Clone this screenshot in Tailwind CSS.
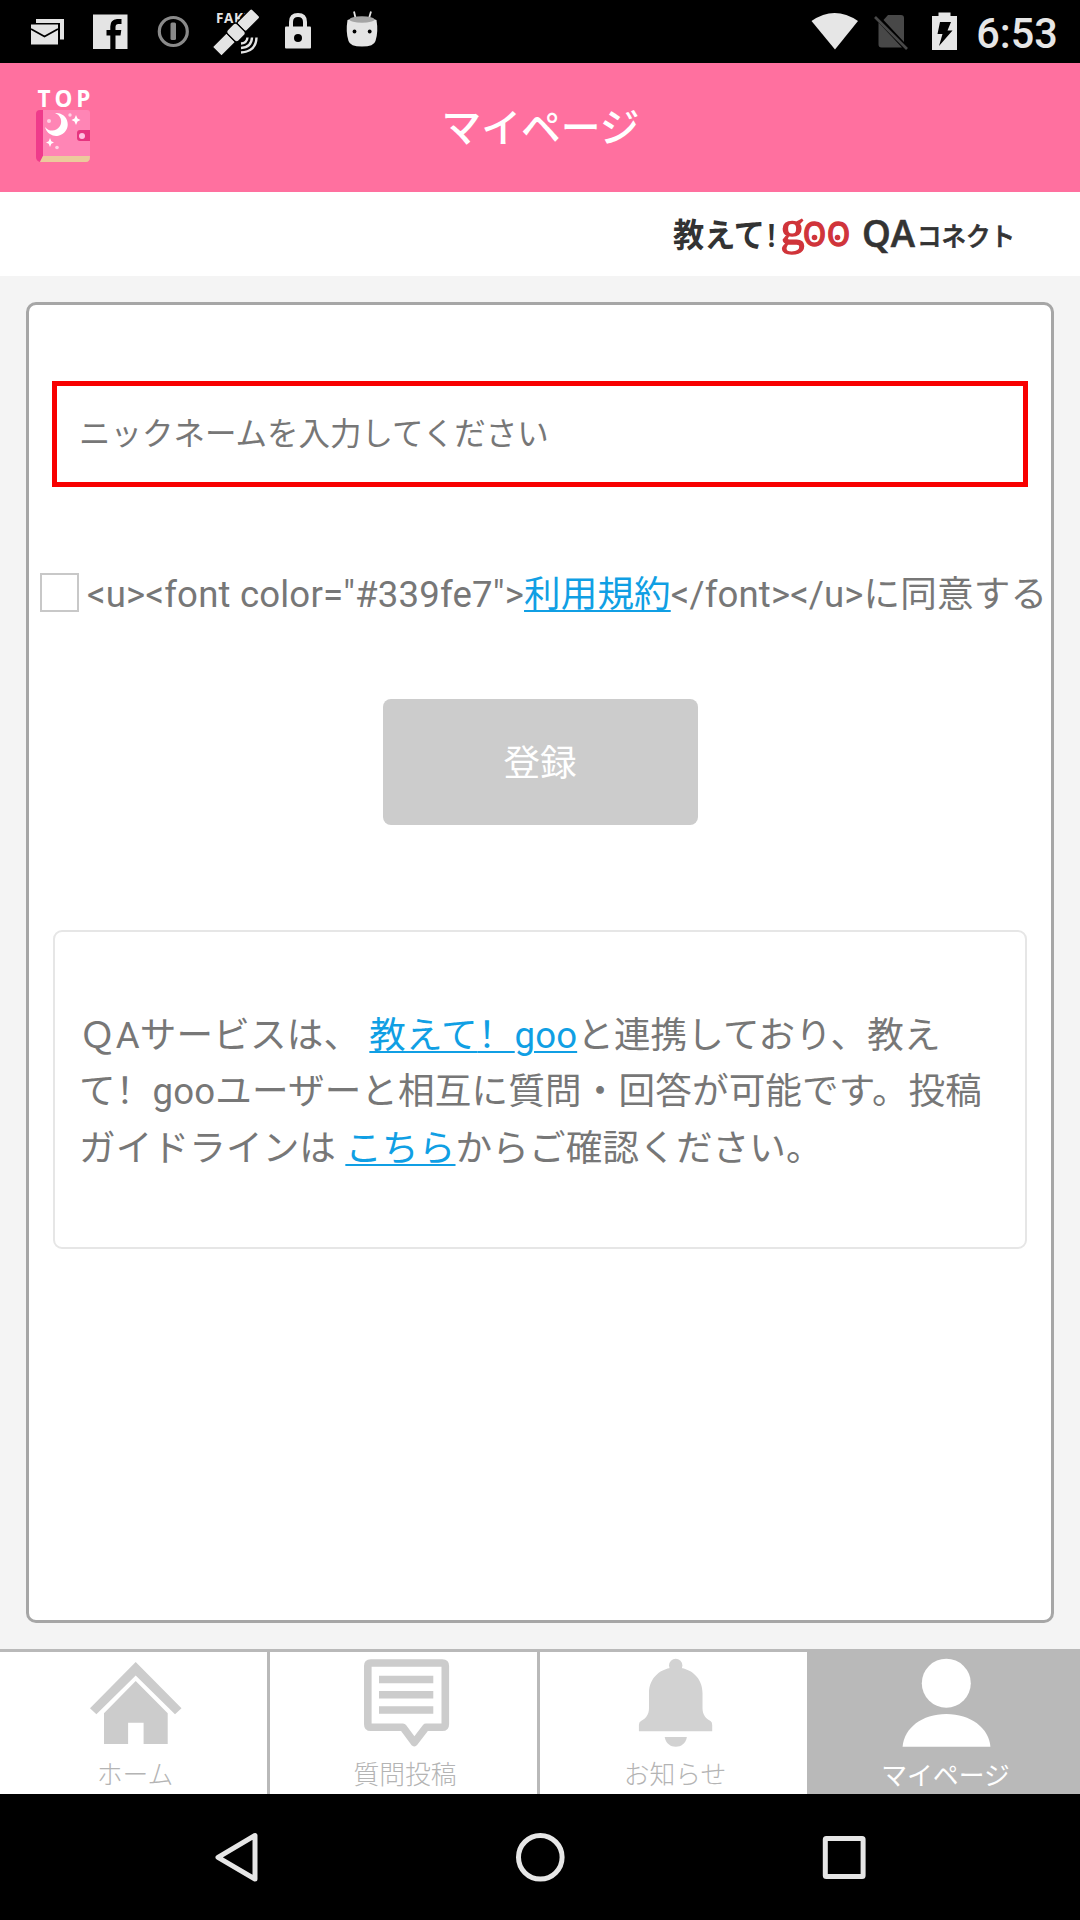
<!DOCTYPE html>
<html lang="ja">
<head>
<meta charset="utf-8">
<title>マイページ</title>
<script src="https://cdn.jsdelivr.net/npm/@tailwindcss/browser@4"></script>
</head>
<body class="bg-black">
<div class="flex h-[1920px] w-[1080px] flex-col overflow-hidden bg-[#f4f4f4] font-['Roboto','Noto_Sans_CJK_JP',sans-serif] text-[#777]">

  <!-- status bar -->
  <div class="flex h-[63px] shrink-0 justify-between bg-black">
    <svg class="block h-[63px] w-[400px]" viewBox="0 0 400 63" fill="#e4e4e4">
      <path d="M36 19H64V39.500H60V23H36Z"/>
      <path d="M31 24.500H58V44.500H31Z"/>
      <path d="M31 29L44.500 36.500L58 29" fill="none" stroke="#000" stroke-width="1.800"/>
      <path d="M93 14.500H127.500V49H115.500V35.500H120.500L121.300 30H115.500V27Q115.500 24 118.500 24H121.500V19H117Q110.300 19.500 110.300 26.500V30H106.500V35.500H110.300V49H93Z"/>
      <circle cx="173.300" cy="31.500" r="14" fill="none" stroke="#8a8a8a" stroke-width="3.200"/>
      <rect x="170.500" y="22.500" width="5.500" height="17.500" rx="1.500" fill="#8a8a8a"/>
      <text x="216" y="23" font-family="Open Sans" font-weight="700" font-size="13.500" textLength="35">FAKE</text>
      <g transform="translate(236 32.500) rotate(-45)" stroke="#000" stroke-width="1.300">
        <rect x="7" y="-6.500" width="21" height="13" rx="2"/>
        <rect x="-27" y="-6.500" width="20" height="13" rx="1"/>
        <rect x="-7" y="-8" width="14" height="16" rx="3"/>
      </g>
      <g fill="none" stroke="#e4e4e4" stroke-width="2.400"><path d="M241 43.500Q247 43 247.500 37.500"/><path d="M241 48Q251.500 47.500 252 37.500"/><path d="M241 52.500Q256 51.500 256.500 37.500"/></g>
      <path d="M291 28V22Q291 15 298 15T305 22V28" fill="none" stroke="#e4e4e4" stroke-width="4"/>
      <rect x="285" y="26.500" width="26" height="22" rx="1"/>
      <circle cx="298" cy="38" r="4" fill="#000"/>
      <path d="M354 11.500L356 20M371 11.500L368.500 20" stroke="#e4e4e4" stroke-width="1.800"/>
      <path d="M347.500 20Q362 14 376.500 20Q378.500 32 375.500 41Q374 46.500 362 46.500T348.500 41Q345.500 32 347.500 20Z"/>
      <ellipse cx="362" cy="19.500" rx="12.500" ry="3.300" fill="#a5a5a5"/>
      <circle cx="354.500" cy="31.500" r="1.900" fill="#000"/><circle cx="369.700" cy="31.500" r="1.900" fill="#000"/>
    </svg>
    <svg class="block h-[63px] w-[300px]" viewBox="0 0 300 63" fill="#e6e6e6">
      <path d="M31.500 21Q54.500 5 78 21L55 49.500Z"/>
      <path d="M108 15H121Q124 15 124 18V42L103.500 20ZM98.500 22.500L122 47.500H101.500Q98.500 47.500 98.500 44.500Z" fill="#484848"/>
      <path d="M95 17L127 49" stroke="#484848" stroke-width="2.600"/>
      <path d="M158.500 12.500H170.500V16H177V50H152V16H158.500Z"/>
      <path d="M160 22H171L167.500 30.500H172.500L159 46L162.500 34H157.500Z" fill="#000"/>
      <text x="196.300" y="48.300" font-family="Roboto" font-weight="500" font-size="42" textLength="81.500" lengthAdjust="spacingAndGlyphs">6:53</text>
    </svg>
  </div>

  <!-- header -->
  <header class="grid h-[129px] shrink-0 grid-cols-3 items-center bg-[#ff709f]">
    <svg class="mb-[5px] ml-8 block h-[90px] w-[66px]" viewBox="32 80 66 90">
      <text x="37.500" y="107" font-family="Open Sans" font-weight="700" font-size="22.500" fill="#fff" textLength="53">TOP</text>
      <rect x="38" y="110" width="52" height="51" rx="3" fill="#ff85b5"/>
      <path d="M40 110H43V156L40 162Q36 161 36 157V114Q36 110 40 110Z" fill="#ef3b8b"/>
      <path d="M43 156H90Q90 162 86 162H40Z" fill="#ecca9c"/>
      <path d="M55 113A11.500 11.500 0 1 1 45 127A9 9 0 1 0 55 113Z" fill="#fff"/>
      <path d="M76 115L77.500 118.500L80.500 120L77.500 121.500L76 125L74.500 121.500L71.500 120L74.500 118.500ZM50 138L51.300 141.300L54 142.500L51.300 143.700L50 147L48.700 143.700L46 142.500L48.700 141.300Z" fill="#fff"/>
      <g fill="#ffd3e5"><circle cx="49" cy="121" r="2"/><circle cx="70" cy="115" r="1.700"/><circle cx="57" cy="147.500" r="1.800"/></g>
      <path d="M90 130H80Q77 130 77 133V138Q77 141 80 141H90Z" fill="#e6347f"/>
      <circle cx="82" cy="136" r="3" fill="#ffbfe0"/>
    </svg>
    <h1 class="pt-[3px] pl-px text-center text-[39.800px] leading-none font-medium text-white">マイページ</h1>
  </header>

  <!-- service logo -->
  <div class="flex h-[84px] shrink-0 justify-end bg-white pr-[60px]">
    <svg class="block h-[84px] w-[350px]" viewBox="670 192 350 84" fill="#333" font-family="'Noto Sans CJK JP',sans-serif" font-weight="700">
      <text x="673" y="247" font-size="33" textLength="92" lengthAdjust="spacingAndGlyphs">教えて</text>
      <text x="767" y="247" font-size="33" font-family="Open Sans" font-weight="600" textLength="9" lengthAdjust="spacingAndGlyphs">!</text>
      <text x="780.500" y="244" font-size="49" font-family="Liberation Serif" font-weight="400" fill="#d0343a" stroke="#d0343a" stroke-width="1.400" textLength="24" lengthAdjust="spacingAndGlyphs">g</text>
      <text x="802.500" y="245.500" font-size="43" font-family="Open Sans" font-weight="400" fill="#d0343a" stroke="#d0343a" stroke-width="1.300" textLength="48" lengthAdjust="spacingAndGlyphs">oo</text>
      <circle cx="814.500" cy="237.500" r="2.800" fill="#d0343a"/><circle cx="837.500" cy="237.500" r="2.800" fill="#d0343a"/>
      <text x="862" y="247" font-size="37" font-family="Open Sans" font-weight="600" stroke="#333" stroke-width=".6" textLength="53" lengthAdjust="spacingAndGlyphs">QA</text>
      <text x="917" y="246" font-size="26" font-weight="500" stroke="#333" stroke-width=".7" textLength="98" lengthAdjust="spacingAndGlyphs">コネクト</text>
    </svg>
  </div>

  <!-- content card -->
  <main class="mx-[26px] mt-[26px] mb-[26px] flex min-h-0 flex-1 flex-col rounded-[10px] border-[3px] border-[#a6a6a6] bg-white">
    <div class="mx-[23px] mt-[76px] flex h-[106px] shrink-0 items-center border-[5px] border-[#f80000] pt-[2px] pl-[22px] text-[31.500px] leading-none">ニックネームを入力してください</div>

    <div class="mt-[79px] ml-[11px] flex h-[52px] shrink-0 items-center">
      <span class="size-[39px] shrink-0 border-2 border-[#c8c8c8]"></span>
      <p class="ml-2 pt-[6px] text-[36.600px] leading-[52px] whitespace-nowrap"><span class="tracking-[0.180px]">&lt;u&gt;&lt;font color="#339fe7"&gt;</span><a class="tracking-[0.100px] text-[#109fe4] underline decoration-2 underline-offset-[3px]">利用規約</a><span class="tracking-[0.120px]">&lt;/font&gt;&lt;/u&gt;に同意する</span></p>
    </div>

    <button class="mt-[81px] flex h-[126px] w-[315px] shrink-0 items-center justify-center self-center rounded-lg bg-[#ccc] pt-[4px] text-[36.600px] leading-none text-white">登録</button>

    <section class="mx-6 mt-[105px] h-[319px] shrink-0 rounded-[9px] border-2 border-[#e6e6e6] pt-[76px] pl-6">
      <p class="text-[36.600px] leading-[56.300px] tracking-[0.150px] whitespace-nowrap">ＱAサービスは、 <a class="text-[#109fe4] underline decoration-2 underline-offset-[3px]">教えて<span lang="zh-CN" class="font-['Noto_Sans_CJK_SC',sans-serif] leading-none">！</span>goo</a>と連携しており、教え<br>て<span lang="zh-CN" class="font-['Noto_Sans_CJK_SC',sans-serif] leading-none">！</span>gooユーザーと相互に質問・回答が可能です。投稿<br>ガイドラインは <a class="text-[#109fe4] underline decoration-2 underline-offset-[3px]">こちら</a>からご確認ください。</p>
    </section>
  </main>

  <!-- tabs -->
  <nav class="grid h-[145px] shrink-0 grid-cols-[270px_270px_267px_273px] border-t-[3px] border-[#b9b9b9] bg-white text-center text-[25.800px] leading-[40px] font-light text-[#b4b4b4]">
    <div class="border-r-[3px] border-[#b9b9b9]">
      <svg class="block h-[103px] w-[267px]" viewBox="0 52 267 103" fill="#ccc">
        <path d="M135.700 62L181.500 108.300L175 114.300L135.700 75.500L96.400 114.300L90 108.300Z"/>
        <path d="M135.700 81L167.700 113.300V144H143.600V122.700H128.100V144H104V113.300Z"/>
      </svg>
      <div class="pl-[3px]">ホーム</div>
    </div>
    <div class="border-r-[3px] border-[#b9b9b9]">
      <svg class="block h-[103px] w-[267px]" viewBox="270 52 267 103" fill="none" stroke="#ccc" stroke-width="7.600" stroke-linejoin="round">
        <path d="M370.800 63H442.300Q445.300 63 445.300 66V124.300Q445.300 127.300 442.300 127.300H426L414.300 142.500L403 127.300H370.800Q367.800 127.300 367.800 124.300V66Q367.800 63 370.800 63Z"/>
        <path d="M379 79.500H433.300M379 94.800H433.300M379 110H433.300"/>
      </svg>
      <div class="pl-[3px]">質問投稿</div>
    </div>
    <div>
      <svg class="block h-[103px] w-[267px]" viewBox="540 52 267 103" fill="#d2d2d2">
        <circle cx="675.700" cy="65.500" r="6.700"/>
        <path d="M675.700 67.500C691 67.500 702.500 78 702.500 93V108C702.500 115 706 118.500 710.500 121Q712.200 122 712.200 125V131.300H638.900V125Q638.900 122 641 121C645.500 118.500 649 115 649 108V93C649 78 660.500 67.500 675.700 67.500Z"/>
        <path d="M664.700 137H686.900C685 150 666.500 150 664.700 137Z"/>
      </svg>
      <div class="pl-[3px]">お知らせ</div>
    </div>
    <div class="bg-[#b9b9b9] text-white">
      <svg class="block h-[103px] w-[273px]" viewBox="807 52 273 103" fill="#fff">
        <circle cx="946.300" cy="83.200" r="24.500"/>
        <path d="M902.600 146.700C904 128 922 114 946.300 114S989 128 990.400 146.700Z"/>
      </svg>
      <div class="pt-px pl-[4px] font-normal">マイページ</div>
    </div>
  </nav>

  <!-- system navigation -->
  <div class="h-[126px] shrink-0 bg-black">
    <svg class="block h-[126px] w-[1080px]" viewBox="0 1794 1080 126" fill="none" stroke="#e6e6e6" stroke-width="5" stroke-linejoin="round">
      <path d="M255 1835.500V1879L218 1857.300Z"/>
      <circle cx="540.300" cy="1857.300" r="21.800"/>
      <rect x="825.300" y="1838.500" width="37.800" height="38" rx="1"/>
    </svg>
  </div>
</div>
</body>
</html>
